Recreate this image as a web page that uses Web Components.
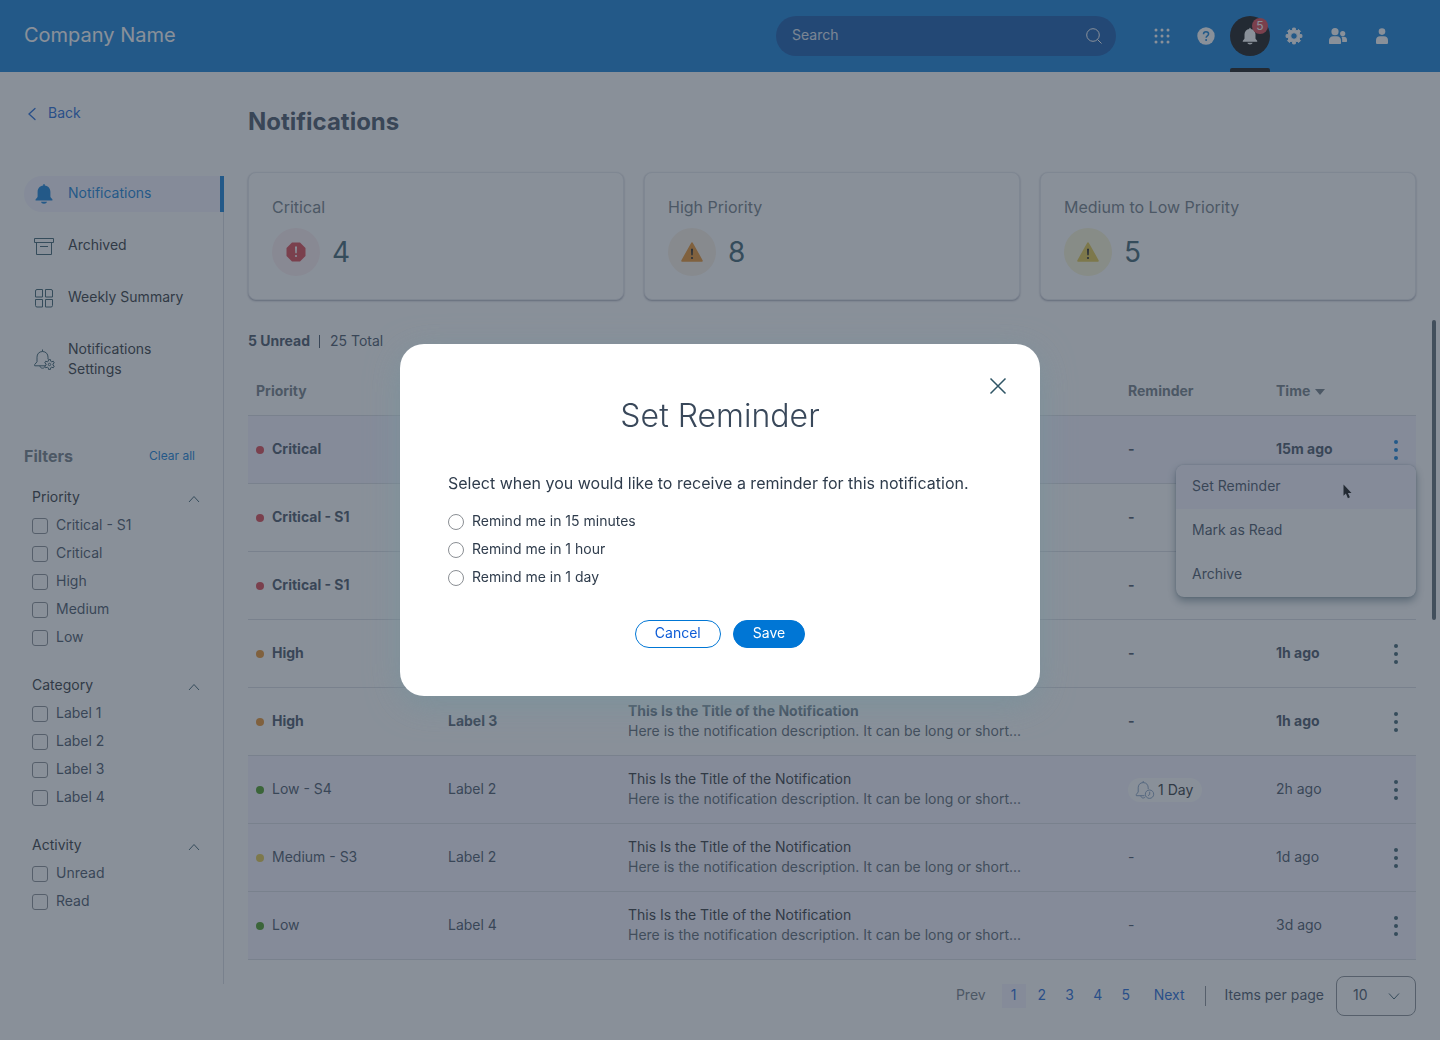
<!DOCTYPE html>
<html lang="en">
<head>
<meta charset="utf-8">
<meta name="viewport" content="width=device-width, initial-scale=1">
<title>Notifications</title>
<style>
  :root {
    --blue: #0076d5;
    --link: #0d5cd6;
    --ink: #23282e;
    --text: #39485a;
    --muted: #68737d;
    --tint: #f4f3ff;
    --line: #d8dae0;
    --icon: #2f5565;
    --red: #d93843;
    --orange: #e88a1c;
    --yellow: #e0c43c;
    --green: #3c9410;
  }
  * { box-sizing: border-box; }
  body {
    margin: 0;
    background: #fff;
    color: var(--text);
    font: 14px/20px Inter, "Liberation Sans", sans-serif;
  }
</style>
</head>
<body>
<notifications-app></notifications-app>

<script>
const base = `<style>
  *, *::before, *::after { box-sizing: border-box; }
  :host { display: block; }
  a { color: inherit; text-decoration: none; }
  button, input, select { font: inherit; color: inherit; margin: 0; }
  button { background: none; border: 0; padding: 0; cursor: pointer; }
  h1, h2, h3, p, ul, fieldset { margin: 0; padding: 0; border: 0; font-weight: inherit; }
  ul { list-style: none; }
  svg { display: block; flex: none; }
</style>`;

function define(name, markup, setup) {
  customElements.define(name, class extends HTMLElement {
    constructor() {
      super();
      this.attachShadow({ mode: 'open' });
    }
    connectedCallback() {
      const html = typeof markup === 'function' ? markup(this) : markup;
      this.shadowRoot.innerHTML = base + html;
      if (setup) setup(this);
    }
  });
}

const gearPath = (cx, cy, outer, inner, teeth) => {
  const pts = [];
  const step = Math.PI * 2 / teeth;
  for (let i = 0; i < teeth; i++) {
    const a = i * step - Math.PI / 2;
    [[-0.32, inner], [-0.2, outer], [0.2, outer], [0.32, inner]].forEach(([k, r]) => {
      pts.push((cx + Math.cos(a + k * step) * r).toFixed(2) + ' ' + (cy + Math.sin(a + k * step) * r).toFixed(2));
    });
  }
  return 'M' + pts.join('L') + 'Z';
};

const bellSolid = 'M10 0.8c.5 0 .8.3.8.8v.7c3.4.4 5.6 2.9 5.6 6.300v4.600c0 .6.3 1 .8 1.500l1.100 1.200c.5.6.2 1.300-.6 1.300H2.300c-.8 0-1.100-.7-.6-1.300l1.100-1.200c.5-.5.8-.9.8-1.500V8.600c0-3.400 2.200-5.900 5.600-6.300v-.7c0-.5.3-.8.8-.8zM7 18.500h6c-.2 1.200-1.400 2-3 2s-2.800-.8-3-2z';
const bellLine = 'M8.500 .5v2M8.500 2.500c-3.600 0-5.500 2.700-5.500 5.700v4.600L.7 15.500v1.300H11M14 8.200c0-3-1.900-5.700-5.500-5.700M14 8.200v2M5.900 16.800c.2 1.500 1.200 2.400 2.600 2.400 1 0 1.700-.4 2.200-1';

const icons = {
  search: `<svg width="16" height="16" viewBox="0 0 16 16" fill="none" stroke="currentColor"><circle cx="7" cy="7" r="6.300"/><path d="M11.500 11.500l4 4"/></svg>`,
  apps: `<svg width="16" height="16" viewBox="0 0 16 16" fill="currentColor">${[2, 8, 14].map(y => [2, 8, 14].map(x => `<circle cx="${x}" cy="${y}" r="1.500"/>`).join('')).join('')}</svg>`,
  help: `<svg width="18" height="18" viewBox="0 0 18 18"><circle cx="9" cy="9" r="8.700" fill="currentColor"/><path d="M6.500 7.200c0-1.500 1-2.500 2.500-2.500s2.600.9 2.600 2.300c0 1.900-2.500 1.900-2.500 3.800" fill="none" stroke="var(--blue)" stroke-width="1.500"/><circle cx="9.100" cy="13" r="1" fill="var(--blue)"/></svg>`,
  bell: `<svg width="16" height="18" viewBox="1 0 18 21" fill="currentColor"><path d="${bellSolid}"/></svg>`,
  gear: `<svg width="18" height="18" viewBox="0 0 18 18" fill="currentColor"><path fill-rule="evenodd" stroke="currentColor" stroke-linejoin="round" d="${gearPath(9, 9, 8, 6, 8)}M9 5.700a3.300 3.300 0 1 0 0 6.600a3.300 3.300 0 1 0 0-6.600z"/></svg>`,
  people: `<svg width="20" height="16" viewBox="0 0 20 16" fill="currentColor"><circle cx="7" cy="3.700" r="3.600"/><path d="M1 12.500c0-2.700 1.800-4.300 4.300-4.300h3.400c2.500 0 4.300 1.600 4.300 4.300V15c0 .6-.4 1-1 1H2c-.6 0-1-.4-1-1z"/><circle cx="14.700" cy="5.600" r="2.600"/><path d="M14.200 14h3.800c.7 0 1-.4 1-1v-1c0-2-1.300-3.200-3.200-3.200h-2.400c.6.900.8 2 .8 3.200z"/></svg>`,
  person: `<svg width="12" height="16" viewBox="0 0 12 16" fill="currentColor"><circle cx="6" cy="3.600" r="3.300"/><path d="M0 12.200c0-2.500 1.700-4 4-4h4c2.300 0 4 1.500 4 4V15c0 .5-.4.900-1 .9H1c-.6 0-1-.4-1-.9z"/></svg>`,
  back: `<svg width="16" height="16" viewBox="0 0 16 16" fill="none" stroke="currentColor" stroke-width="1.300" stroke-linecap="round"><path d="M11 2.500L5 8l6 5.500"/></svg>`,
  notifications: `<svg width="20" height="22" viewBox="0 0 20 21.500" fill="currentColor"><path d="${bellSolid}"/></svg>`,
  archive: `<svg width="20" height="20" viewBox="0 0 20 20" fill="none" stroke="currentColor"><path d="M.5 2.500h19v4H.5zM2.500 6.500v12h15v-12M6 10.500h8"/></svg>`,
  grid: `<svg width="20" height="20" viewBox="0 0 20 20" fill="none" stroke="currentColor"><path d="M3 1.500h5.500V9h-7V3A1.500 1.500 0 0 1 3 1.500zM11.500 1.500H17A1.500 1.500 0 0 1 18.500 3v6h-7zM1.500 11.500h7V19H3a1.500 1.500 0 0 1-1.500-1.500zM11.500 11.500h7v6A1.500 1.500 0 0 1 17 19h-5.500z"/></svg>`,
  bellgear: `<svg width="22" height="22" viewBox="-1 0 22 22" fill="none" stroke="currentColor"><path d="${bellLine}"/><path d="${gearPath(15.500, 15.500, 5, 3.500, 6)}" stroke-linejoin="round"/><circle cx="15.500" cy="15.500" r="1.200"/></svg>`,
  bellclock: `<svg width="20" height="20" viewBox="0 -1 20 20" fill="none" stroke="currentColor" stroke-width=".9"><path d="M8.200 0v1.600M8.200 1.600c-3.300 0-5 2.400-5 5.200v4.200L1.300 13.500v1.200H9.500M13.200 8V6.800c0-2.800-1.700-5.200-5-5.200M5.800 14.700c.2 1.500 1.200 2.300 2.400 2.300 1 0 1.700-.5 2.100-1.200"/><circle cx="14.500" cy="13.200" r="4.200"/><path d="M14.700 10.700v2.800l-1.700 1.200"/></svg>`,
  up: `<svg width="12" height="12" viewBox="0 0 12 12" fill="none" stroke="currentColor"><path d="M1 9l5-5.500L11 9"/></svg>`,
  down: `<svg width="12" height="12" viewBox="0 0 12 12" fill="none" stroke="currentColor"><path d="M1 3.500L6 9l5-5.500"/></svg>`,
  dots: `<svg width="4" height="20" viewBox="0 0 4 20" fill="currentColor"><circle cx="2" cy="2" r="2"/><circle cx="2" cy="10" r="2"/><circle cx="2" cy="18" r="2"/></svg>`,
  close: `<svg width="20" height="20" viewBox="0 0 20 20" fill="none" stroke="currentColor" stroke-width="1.500"><path d="M2.500 2.500l15 15M17.500 2.500l-15 15"/></svg>`,
  critical: `<svg width="20" height="20" viewBox="0 0 20 20"><path d="M6 .5h8L19.500 6v8L14 19.500H6L.5 14V6z" fill="var(--red)"/><path d="M9 4.500h2l-.3 6.800H9.300z" fill="#fff"/><circle cx="10" cy="14" r="1.100" fill="#fff"/></svg>`,
  warning: `<svg width="22" height="20" viewBox="0 0 22 20"><path d="M10.100.9c.4-.8 1.400-.8 1.800 0l9.700 17.300c.4.8 0 1.600-.9 1.600H1.300c-.9 0-1.300-.8-.9-1.600z" fill="currentColor"/><path d="M10 6.800h2l-.3 6.500h-1.400z" fill="#111"/><circle cx="11" cy="16" r="1.100" fill="#111"/></svg>`,
  cursor: `<svg width="9" height="15" viewBox="0 0 9 15"><path d="M.5 .5v11.300l2.400-2.200 2 4.600 2-.9-2-4.400h3.600z" fill="#000"/></svg>`
};

define('ui-icon', el => `<style>
  :host { display: inline-flex; flex: none; align-items: center; justify-content: center; }
</style>${icons[el.getAttribute('name')]}`);

define('app-header', `<style>
  :host { background: var(--blue); color: #fff; }
  header { height: 72px; padding: 0 38px 0 24px; display: flex; align-items: center; }
  .brand { flex: 1; font-size: 20px; line-height: 24px; padding-bottom: 2px; }
  .search { width: 340px; height: 40px; margin-right: 26px; padding: 0 14px 0 16px; border-radius: 20px;
    background: #024ca6; display: flex; align-items: center; }
  .search input { flex: 1; min-width: 0; border: 0; padding: 0 0 2px; background: none; outline: 0; }
  .search input::placeholder { color: #fff; opacity: .85; }
  nav { display: flex; align-self: stretch; align-items: center; gap: 4px; }
  nav button { position: relative; width: 40px; height: 40px; display: flex; align-items: center; justify-content: center; }
  nav .on { background: #000; border-radius: 50%; }
  nav .on::after { content: ""; position: absolute; left: 0; right: 0; bottom: -16px; height: 4px; background: #000; border-radius: 2px 2px 0 0; }
  .badge { position: absolute; top: 2px; right: 2px; width: 16px; height: 16px; border-radius: 50%; background: var(--red);
    font-size: 12px; line-height: 16px; text-align: center; }
</style>
<header>
  <div class="brand">Company Name</div>
  <label class="search"><input type="text" placeholder="Search" aria-label="Search"><ui-icon name="search"></ui-icon></label>
  <nav aria-label="Tools">
    <button aria-label="Apps"><ui-icon name="apps"></ui-icon></button>
    <button aria-label="Help"><ui-icon name="help"></ui-icon></button>
    <button aria-label="Alerts" class="on"><ui-icon name="bell"></ui-icon><span class="badge">5</span></button>
    <button aria-label="Configure"><ui-icon name="gear"></ui-icon></button>
    <button aria-label="Users"><ui-icon name="people"></ui-icon></button>
    <button aria-label="Profile"><ui-icon name="person"></ui-icon></button>
  </nav>
</header>`);

define('nav-item', el => `<style>
  a { display: flex; align-items: center; min-height: 36px; padding: 7px 32px 9px 8px; gap: 12px; color: var(--ink); }
  ui-icon { width: 24px; height: 20px; color: var(--icon); padding-top: 2px; }
  :host([active]) { margin-right: -1px; }
  :host([active]) a { color: var(--blue); background: var(--tint); border-right: 4px solid var(--blue); border-radius: 18px 0 0 18px; }
  :host([active]) ui-icon { color: var(--blue); }
</style>
<a href="#"><ui-icon name="${el.getAttribute('icon')}"></ui-icon><span><slot></slot></span></a>`);

define('filter-group', el => `<style>
  h3 { font-size: 14px; }
  h3 button { display: flex; width: 100%; height: 20px; align-items: center; justify-content: space-between; color: var(--ink); padding-bottom: 2px; }
  h3 ui-icon { color: var(--icon); padding-top: 3px; }
  fieldset { display: flex; flex-direction: column; gap: 8px; margin-top: 8px; min-width: 0; }
  label { display: flex; gap: 8px; align-items: center; }
  input { appearance: none; width: 16px; height: 16px; border: 1px solid #80868c; border-radius: 3px; background: #fff; flex: none; }
  span { padding-bottom: 2px; line-height: 18px; }
</style>
<h3><button aria-expanded="true">${el.getAttribute('heading')}<ui-icon name="up"></ui-icon></button></h3>
<fieldset aria-label="${el.getAttribute('heading')}">
${el.getAttribute('options').split(',').map(o => `<label><input type="checkbox"><span>${o}</span></label>`).join('')}
</fieldset>`);

define('side-bar', `<style>
  :host { flex: none; width: 224px; padding: 32px 0 56px 24px; display: flex; flex-direction: column; }
  .back { display: flex; align-items: center; gap: 8px; color: var(--link); margin-bottom: 52px; line-height: 18px; padding-bottom: 2px; }
  .back ui-icon { padding-top: 2px; }
  .column { flex: 1; border-right: 1px solid var(--line); }
  nav { display: flex; flex-direction: column; gap: 16px; }
  .filters { margin-top: 56px; }
  .head { display: flex; justify-content: space-between; align-items: center; padding-right: 28px; margin-bottom: 20px; line-height: 24px; }
  .head h2 { font-size: 16px; font-weight: 700; color: var(--muted); }
  .head a { font-size: 12px; color: var(--blue); }
  .groups { display: flex; flex-direction: column; gap: 28px; padding: 0 23px 0 8px; }
</style>
<a class="back" href="#"><ui-icon name="back"></ui-icon>Back</a>
<div class="column">
  <nav aria-label="Sections">
    <nav-item icon="notifications" active>Notifications</nav-item>
    <nav-item icon="archive">Archived</nav-item>
    <nav-item icon="grid">Weekly Summary</nav-item>
    <nav-item icon="bellgear">Notifications Settings</nav-item>
  </nav>
  <section class="filters">
    <div class="head"><h2>Filters</h2><a href="#">Clear all</a></div>
    <div class="groups">
      <filter-group heading="Priority" options="Critical - S1,Critical,High,Medium,Low"></filter-group>
      <filter-group heading="Category" options="Label 1,Label 2,Label 3,Label 4"></filter-group>
      <filter-group heading="Activity" options="Unread,Read"></filter-group>
    </div>
  </section>
</div>`);

define('stat-card', el => `<style>
  :host { flex: 1; padding: 23px; border: 1px solid #e6e8ee; border-radius: 8px; box-shadow: 0 1px 2px rgba(20, 24, 60, .4); background: #fff; }
  p { font-size: 16px; line-height: 22px; padding-bottom: 2px; color: var(--muted); }
  div { display: flex; align-items: center; gap: 12px; margin-top: 8px; }
  ui-icon { width: 48px; height: 48px; border-radius: 50%; background: ${el.getAttribute('tint')}; color: ${el.getAttribute('tone')}; }
  strong { font-size: 28px; line-height: 48px; font-weight: 400; color: var(--icon); }
</style>
<p><slot></slot></p>
<div><ui-icon name="${el.getAttribute('icon')}"></ui-icon><strong>${el.getAttribute('value')}</strong></div>`);

define('action-menu', `<style>
  :host { width: 240px; border-radius: 8px; overflow: hidden; background: #fff; box-shadow: 0 4px 8px rgba(0, 40, 60, .45), 0 0 2px rgba(0, 40, 60, .3); font-weight: 400; }
  button { display: block; width: 100%; height: 44px; padding: 0 16px 2px; text-align: left; }
  button:first-child { background: var(--tint); }
  ui-icon { position: absolute; left: 167px; top: 19px; }
</style>
<button>Set Reminder</button><button>Mark as Read</button><button>Archive</button>
<ui-icon name="cursor"></ui-icon>`.replace('<button>', '<button class="first">').replace('button:first-child', '.first'));

const title = 'This Is the Title of the Notification';
const detail = 'Here is the notification description. It can be long or short...';
const rows = [
  { dot: 'red', priority: 'Critical', time: '15m ago', unread: true, open: true },
  { dot: 'red', priority: 'Critical - S1', unread: true },
  { dot: 'red', priority: 'Critical - S1', unread: true },
  { dot: 'orange', priority: 'High', time: '1h ago', unread: true },
  { dot: 'orange', priority: 'High', label: 'Label 3', title, detail, time: '1h ago', unread: true },
  { dot: 'green', priority: 'Low - S4', label: 'Label 2', title, detail, time: '2h ago', reminder: '1 Day' },
  { dot: 'yellow', priority: 'Medium - S3', label: 'Label 2', title, detail, time: '1d ago' },
  { dot: 'green', priority: 'Low', label: 'Label 4', title, detail, time: '3d ago' }
];

define('notification-table', `<style>
  table { width: 100%; border-collapse: separate; border-spacing: 0; table-layout: fixed; }
  th, td { text-align: left; padding: 0 8px 2px; border-bottom: 1px solid var(--line); }
  th { height: 48px; font-weight: 700; color: var(--muted); }
  td { height: 68px; }
  .unread td { font-weight: 700; }
  .read td, .open td { background: var(--tint); }
  .p { width: 192px; } .l { width: 180px; } .r { width: 148px; } .t { width: 108px; } .m { width: 40px; }
  .tag { display: flex; align-items: center; gap: 8px; }
  .tag i { width: 8px; height: 8px; border-radius: 50%; margin-top: 2px; }
  .title { color: var(--ink); }
  .unread .title { color: var(--text); }
  .desc { font-weight: 400; color: #4c5866; }
  td.remind { padding-bottom: 0; }
  .pill { display: flex; width: fit-content; align-items: center; gap: 3px; height: 24px; padding: 0 9px 0 7px; border-radius: 12px; background: #fff; color: var(--ink); }
  .pill ui-icon { color: #6f8fb8; }
  th button { display: inline-flex; align-items: center; gap: 5px; font-weight: 700; }
  th i { border: 5px solid transparent; border-top: 6px solid; border-bottom: 0; margin-top: 2px; }
  td.more { position: relative; padding: 0; }
  .more button { display: flex; width: 100%; height: 40px; align-items: center; justify-content: center; color: var(--icon); }
  .open .more button.dots { color: var(--blue); }
  action-menu { position: absolute; right: 0; top: 49px; z-index: 1; }
</style>
<table>
  <thead><tr><th class="p">Priority</th><th class="l"></th><th></th><th class="r">Reminder</th>
  <th class="t"><button>Time<i></i></button></th><th class="m"></th></tr></thead>
  <tbody>
  ${rows.map(r => `<tr class="${r.unread ? 'unread' : 'read'}${r.open ? ' open' : ''}">
    <td><span class="tag"><i style="background:var(--${r.dot})"></i>${r.priority}</span></td>
    <td>${r.label || ''}</td>
    <td>${r.title ? `<div class="title">${r.title}</div><div class="desc">${r.detail}</div>` : ''}</td>
    ${r.reminder ? `<td class="remind"><span class="pill"><ui-icon name="bellclock"></ui-icon>${r.reminder}</span></td>` : '<td>-</td>'}
    <td>${r.time || ''}</td>
    <td class="more"><button class="dots" aria-label="Actions"><ui-icon name="dots"></ui-icon></button>${r.open ? '<action-menu></action-menu>' : ''}</td>
  </tr>`).join('')}
  </tbody>
</table>`);

define('page-controls', `<style>
  :host { display: flex; justify-content: flex-end; align-items: center; color: var(--text); }
  nav { display: flex; align-items: center; gap: 4px; color: var(--link); }
  nav a { width: 24px; height: 24px; line-height: 22px; text-align: center; }
  nav .prev, nav .next { width: auto; }
  nav .prev { color: var(--muted); margin-right: 12px; }
  nav .next { margin-left: 12px; }
  nav [aria-current] { background: var(--tint); }
  label { display: flex; align-items: center; gap: 12px; }
  label::before { content: ""; width: 1px; height: 20px; background: #80868c; margin: 0 7px 0 20px; }
  label > span:first-child { padding-bottom: 2px; }
  .select { position: relative; width: 80px; height: 40px; }
  select { appearance: none; width: 100%; height: 100%; padding: 0 32px 2px 16px; border: 1px solid #80868c; border-radius: 8px; background: #fff; }
  ui-icon { position: absolute; right: 16px; top: 14px; color: var(--icon); pointer-events: none; }
</style>
<nav aria-label="Pages">
  <a class="prev" href="#">Prev</a>
  <a href="#" aria-current="page">1</a><a href="#">2</a><a href="#">3</a><a href="#">4</a><a href="#">5</a>
  <a class="next" href="#">Next</a>
</nav>
<label><span>Items per page</span><span class="select"><select><option>10</option></select><ui-icon name="down"></ui-icon></span></label>`);

define('reminder-dialog', `<style>
  :host { position: fixed; inset: 0; z-index: 10; background: rgba(58, 70, 85, .6); display: flex; align-items: center; justify-content: center; }
  section { position: relative; width: 640px; max-width: 100%; padding: 48px; border-radius: 24px; background: #fff;
    box-shadow: 0 8px 32px rgba(122, 146, 156, .9); }
  .close { position: absolute; top: 32px; right: 32px; color: var(--icon); }
  h2 { font-size: 32px; line-height: 48px; font-weight: 300; text-align: center; margin-bottom: 32px; }
  p { font-size: 16px; line-height: 22px; padding-bottom: 2px; margin-bottom: 16px; color: #2f3c4c; }
  fieldset { display: flex; flex-direction: column; gap: 8px; color: #2f3c4c; }
  label { display: flex; align-items: center; gap: 8px; }
  label span { line-height: 18px; padding-bottom: 2px; }
  input { appearance: none; width: 16px; height: 16px; border: 1px solid #8b8f94; border-radius: 50%; flex: none; }
  footer { display: flex; justify-content: center; gap: 12px; margin-top: 32px; }
  footer button { height: 28px; padding: 0 19px 2px; border: 1px solid var(--blue); border-radius: 14px; color: var(--link); line-height: 24px; }
  footer .save { background: var(--blue); color: #fff; }
</style>
<section role="dialog" aria-modal="true" aria-labelledby="t">
  <button class="close" aria-label="Close"><ui-icon name="close"></ui-icon></button>
  <h2 id="t">Set Reminder</h2>
  <p>Select when you would like to receive a reminder for this notification.</p>
  <fieldset aria-labelledby="t">
    <label><input type="radio" name="when"><span>Remind me in 15 minutes</span></label>
    <label><input type="radio" name="when"><span>Remind me in 1 hour</span></label>
    <label><input type="radio" name="when"><span>Remind me in 1 day</span></label>
  </fieldset>
  <footer><button>Cancel</button><button class="save">Save</button></footer>
</section>`);

define('notifications-app', `<style>
  :host { min-height: 100vh; display: flex; flex-direction: column; }
  .body { flex: 1; display: flex; }
  main { flex: 1; min-width: 0; padding: 32px 24px 24px; }
  h1 { font-size: 24px; line-height: 36px; font-weight: 700; color: var(--text); margin-bottom: 32px; }
  .cards { display: flex; gap: 20px; margin-bottom: 32px; }
  .count { display: flex; align-items: center; gap: 8px; line-height: 18px; padding-bottom: 2px; margin-bottom: 16px; }
  .count i { width: 1px; height: 13px; background: var(--text); margin: 0 2px 0 1px; }
  page-controls { margin-top: 16px; }
  .thumb { position: fixed; right: 4px; top: 320px; width: 4px; height: 300px; border-radius: 2px; background: #4f5c66; }
</style>
<app-header></app-header>
<div class="body">
  <side-bar></side-bar>
  <main>
    <h1>Notifications</h1>
    <div class="cards">
      <stat-card icon="critical" value="4" tint="#fdeef1">Critical</stat-card>
      <stat-card icon="warning" value="8" tint="#fbf0e4" tone="var(--orange)">High Priority</stat-card>
      <stat-card icon="warning" value="5" tint="#faf4d2" tone="var(--yellow)">Medium to Low Priority</stat-card>
    </div>
    <div class="count"><b>5 Unread</b><i></i><span>25 Total</span></div>
    <notification-table></notification-table>
    <page-controls></page-controls>
  </main>
</div>
<div class="thumb"></div>
<reminder-dialog></reminder-dialog>`);
</script>
</body>
</html>
